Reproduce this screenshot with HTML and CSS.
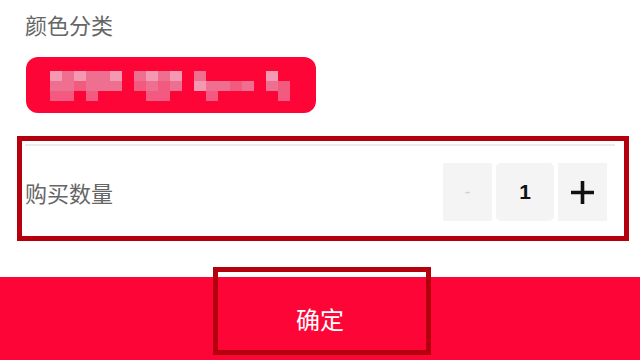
FILE: index.html
```html
<!DOCTYPE html>
<html>
<head>
    <title>购买数量</title>
    <link rel="stylesheet" href="styles.css">
</head>
<body>
    <div class="sheet">
        <h3 class="section-title">颜色分类</h3>
        <div class="color-pill">
            <div class="mosaic">
                <i class="a"></i><i class="b"></i><i class="a"></i><i class="b"></i><i class="b"></i><i class="a"></i><i></i><i class="b"></i><i class="a"></i><i class="b"></i><i class="a"></i><i></i><i class="b"></i><i></i><i></i><i></i><i></i><i></i><i class="a"></i><i></i><i></i>
                <i class="b"></i><i class="b"></i><i class="c"></i><i class="b"></i><i class="b"></i><i class="b"></i><i></i><i class="c"></i><i class="b"></i><i class="c"></i><i class="b"></i><i></i><i class="a"></i><i class="b"></i><i class="b"></i><i class="c"></i><i class="b"></i><i></i><i class="b"></i><i class="c"></i><i></i>
                <i class="c"></i><i class="c"></i><i></i><i class="c"></i><i></i><i></i><i></i><i></i><i class="c"></i><i class="c"></i><i></i><i></i><i></i><i class="c"></i><i></i><i></i><i></i><i></i><i></i><i class="c"></i><i></i>
            </div>
        </div>

        <div class="qty-section">
            <div class="divider"></div>
            <div class="qty-row">
                <span class="qty-label">购买数量</span>
                <div class="stepper">
                    <button class="step minus">-</button>
                    <span class="step count">1</span>
                    <button class="step plus">
                        <svg width="23" height="23" viewBox="0 0 23 23">
                            <path d="M11.5 0V23M0 11.5H23" stroke="#111" stroke-width="3.6"/>
                        </svg>
                    </button>
                </div>
            </div>
        </div>

        <div class="footer">
            <span class="confirm">确定</span>
        </div>

        <!-- highlight marks drawn over the screenshot -->
        <div class="mark mark-qty"></div>
        <div class="mark mark-ok"></div>
    </div>
</body>
</html>
```

FILE: styles.css
```css
* {
    margin: 0;
    padding: 0;
    box-sizing: border-box;
}

body {
    background: #fff;
    font-family: "Noto Sans CJK SC", "Noto Sans", sans-serif;
}

.sheet {
    position: relative;
    width: 640px;
    height: 360px;
    overflow: hidden;
}

.section-title {
    padding: 11px 0 0 25px;
    font-size: 22px;
    font-weight: normal;
    line-height: 26px;
    color: #666;
}

.color-pill {
    width: 290px;
    height: 56px;
    margin: 20px 0 0 26px;
    padding: 14px 0 0 24px;
    border-radius: 12px;
    background: #fe0537;
}

.mosaic {
    display: grid;
    grid-template-columns: repeat(21, 12px);
    grid-auto-rows: 10px;
    filter: blur(0.6px);
}

.mosaic i.a { background: #f39ab2; }
.mosaic i.b { background: #ef6f90; }
.mosaic i.c { background: #f35a80; }

.qty-section {
    margin-top: 31px;
}

.divider {
    height: 2px;
    margin: 0 25px 0 25px;
    background: #ececec;
}

.qty-row {
    display: flex;
    align-items: center;
    justify-content: space-between;
    padding: 17px 33px 0 25px;
}

.qty-label {
    font-size: 22px;
    color: #666;
}

.stepper {
    display: flex;
    gap: 4px;
}

.step {
    display: flex;
    align-items: center;
    justify-content: center;
    height: 58px;
    border: none;
    background: #f4f4f4;
    font-family: "Liberation Sans", Arial, sans-serif;
}

.minus {
    width: 49px;
    font-size: 18px;
    color: #d0d0d0;
}

.count {
    width: 58px;
    border-radius: 5px;
    font-size: 21px;
    font-weight: bold;
    color: #111;
}

.plus {
    width: 49px;
}

.footer {
    display: flex;
    align-items: center;
    justify-content: center;
    height: 83px;
    margin-top: 56px;
    background: #fe0537;
}

.confirm {
    font-size: 24px;
    color: #fff;
}

.mark {
    position: absolute;
    border: 5px solid #b4000c;
}

.mark-qty {
    left: 17px;
    top: 136px;
    width: 612px;
    height: 105px;
}

.mark-ok {
    left: 213px;
    top: 267px;
    width: 218px;
    height: 88px;
}
```
